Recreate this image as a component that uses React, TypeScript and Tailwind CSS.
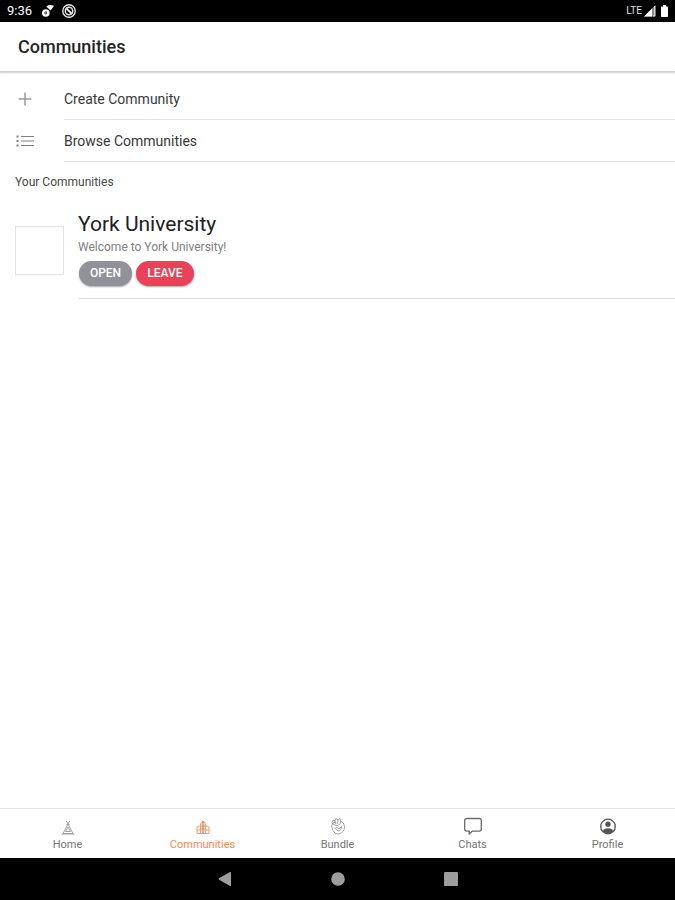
import type { ReactNode } from 'react';

function StatusBar() {
  return (
    <div className="flex h-[22px] shrink-0 items-center justify-between bg-black px-[7px] text-white">
      <div className="flex items-center">
        <span className="w-[34px] text-[13px] leading-4">9:36</span>
        <svg className="mr-[7px]" width="14" height="14" viewBox="0 0 14 14" fill="none" aria-hidden="true">
          <circle cx="4.8" cy="9" r="2.6" stroke="#fff" strokeWidth="2.4" />
          <circle cx="4.8" cy="9" r="1" fill="#aaa" />
          <path d="M5.3 2.500Q9 0 13 2L9.500 6.500Z" fill="#fff" />
        </svg>
        <svg width="14" height="14" viewBox="0 0 14 14" fill="none" stroke="#e4e4e4" aria-hidden="true">
          <circle cx="7" cy="7" r="6.200" strokeWidth="1.400" />
          <circle cx="7" cy="7" r="3.700" strokeWidth="1.500" />
          <path d="M4 4l6 6" strokeWidth="1.800" />
        </svg>
      </div>
      <div className="flex items-center">
        <span className="text-[10px] leading-4 text-[#e0e0e0]">LTE</span>
        <svg className="ml-[2px]" width="12" height="12" viewBox="0 0 12 12" aria-hidden="true">
          <path d="M0 11.500L11.500 0v11.500Z" fill="#8a8a8a" />
          <path d="M0 11.500L8 3.500v8Z" fill="#fff" />
          <path d="M10.800 1v10h-2" fill="none" stroke="#eee" strokeWidth="1" />
        </svg>
        <svg className="ml-[5px]" width="7" height="12" viewBox="0 0 7 12" fill="#fff" aria-hidden="true">
          <path d="M2 0h3v1.500h1.200q.8 0 .8.800v8.700q0 1-.8 1H.8q-.8 0-.8-1V2.300q0-.8.8-.8H2Z" />
        </svg>
      </div>
    </div>
  );
}

function MenuRow({ icon, label }: { icon: ReactNode; label: string }) {
  return (
    <button type="button" className="flex h-[42px] w-full items-center pl-[15px] text-left">
      <span className="flex w-[49px] items-center">{icon}</span>
      <span className="flex h-full flex-1 items-center border-b border-[#e0e0e0] pt-[2px] text-[14px] text-[#383838]">{label}</span>
    </button>
  );
}

const tabs: { label: string; active?: boolean; icon: ReactNode }[] = [
  {
    label: 'Home',
    icon: (
      <g stroke="#a2a2a2" strokeWidth="1">
        <path d="M8.300 4L10 7L11.700 4M10 7L5 16.500H15ZM10 10L7.500 14.500H12.500Z" />
        <path d="M3.500 17h13M8.500 7.500h3" />
      </g>
    ),
  },
  {
    label: 'Communities',
    active: true,
    icon: (
      <g stroke="#f29a68" strokeWidth="1">
        <path d="M7.500 16.500V7M12.500 7V16.500M4 10V16.500H16V10L12.500 8.500M7.500 8.500L4 10" />
        <path d="M7.500 7L10 4L12.500 7M7.500 9H12.500M8 12H12M4 13H7.500M12.500 13H16" />
        <path d="M10 4V16.500" stroke="#ee7c3c" strokeWidth="1.400" />
      </g>
    ),
  },
  {
    label: 'Bundle',
    icon: (
      <g stroke="#999" strokeWidth="0.900">
        <path d="M5 5.500Q2.500 9 4.500 13Q7 18 11 17Q16.500 15 16.500 10Q16 5 12.500 4.500Q13 8 9 8.500Q5 8 4 6L5 3L7 4L8 1.500L10 3L12 1.500L12.500 4.500" />
        <path d="M7 4L8 7M10 3L9.500 7M5 6L8 5M7 10.500Q8.500 14 11 14Q14 12.500 13.500 9.500M8 10L11 12L14 9" />
      </g>
    ),
  },
  {
    label: 'Chats',
    icon: (
      <path
        d="M3.800 1.500H16.200Q18.300 1.500 18.300 3.600V12Q18.300 14.100 16.200 14.100H9.500L6.200 17V14.100H3.800Q1.700 14.100 1.700 12V3.600Q1.700 1.500 3.800 1.500Z"
        stroke="#6c6c6c"
        strokeWidth="1.300"
        strokeLinejoin="round"
      />
    ),
  },
  {
    label: 'Profile',
    icon: (
      <>
        <circle cx="10" cy="9.500" r="7.300" stroke="#555" strokeWidth="1.300" />
        <circle cx="10" cy="7.300" r="2.700" fill="#555" />
        <path d="M4.700 14Q6 11.200 10 11.200Q14 11.200 15.300 14Q13 16.800 10 16.800Q7 16.800 4.700 14Z" fill="#555" />
      </>
    ),
  },
];

export default function App() {
  return (
    <div className="flex min-h-screen flex-col bg-white font-[Roboto,sans-serif]">
      <StatusBar />
      <header className="flex h-[49px] shrink-0 items-center px-[18px] shadow-[0_1px_2px_1px_rgba(0,0,0,0.2)]">
        <h1 className="text-[18px] font-medium text-[#242424]">Communities</h1>
      </header>

      <main className="flex-1 pt-[7px]">
        <MenuRow
          label="Create Community"
          icon={
            <svg width="20" height="20" viewBox="0 0 20 20" stroke="#9a9a9a" strokeWidth="1.500" aria-hidden="true">
              <path d="M10 3.500V16.500M3.500 10H16.500" />
            </svg>
          }
        />
        <MenuRow
          label="Browse Communities"
          icon={
            <svg width="20" height="20" viewBox="0 0 20 20" stroke="#808080" strokeWidth="1.200" aria-hidden="true">
              <path d="M6 5.500H19M6 10H19M6 14.500H19" />
              <path d="M1.500 5.500H3.500M1.500 10H3.500M1.500 14.500H3.500" strokeWidth="1.900" />
            </svg>
          }
        />
        <h2 className="flex h-[40px] items-center px-[15px] text-[12px] text-[#484848]">Your Communities</h2>
        <section className="flex pl-[15px]">
          <div className="mt-[24px] h-[49px] w-[49px] shrink-0 border border-[#e2e2e2]" />
          <div className="ml-[14px] flex-1 border-b border-[#dedede] pt-[8px] pb-[12px]">
            <h3 className="text-[21px] leading-[28px] text-[#202020]">York University</h3>
            <p className="text-[12px] leading-[18px] text-[#808080]">Welcome to York University!</p>
            <div className="mt-[5px] flex gap-[4px] pl-px text-[12px] font-medium text-white">
              <button type="button" className="h-[25px] w-[53px] rounded-full bg-[#919299] pb-[2px] shadow-[0_1px_2px_rgba(0,0,0,0.35)]">OPEN</button>
              <button type="button" className="h-[25px] w-[58px] rounded-full bg-[#ed4059] pb-[2px] shadow-[0_1px_2px_rgba(0,0,0,0.35)]">LEAVE</button>
            </div>
          </div>
        </section>
      </main>

      <nav aria-label="Main" className="flex h-[50px] shrink-0 border-t border-[#e4e4e4]">
        {tabs.map((tab) => (
          <button
            key={tab.label}
            type="button"
            aria-current={tab.active ? 'page' : undefined}
            className={
              tab.active
                ? 'flex flex-1 basis-0 flex-col items-center pt-[8px] text-[11px] leading-4 text-[#f0894f]'
                : 'flex flex-1 basis-0 flex-col items-center pt-[8px] text-[11px] leading-4 text-[#747474]'
            }
          >
            <svg width="20" height="20" viewBox="0 0 20 20" fill="none" aria-hidden="true">
              {tab.icon}
            </svg>
            {tab.label}
          </button>
        ))}
      </nav>

      <div className="flex h-[42px] shrink-0 items-center justify-center gap-[93px] bg-black">
        <button type="button" aria-label="Back" className="flex">
          <svg width="20" height="16" viewBox="0 0 20 16" fill="#9d9d9d" aria-hidden="true">
            <path d="M4 7.300L15 1Q16 .6 16 1.600V14.400Q16 15.400 15 15L4 8.700Q3 8 4 7.300Z" />
          </svg>
        </button>
        <button type="button" aria-label="Home" className="flex">
          <svg width="20" height="16" viewBox="0 0 20 16" fill="#9d9d9d" aria-hidden="true">
            <circle cx="10" cy="8" r="6.800" />
          </svg>
        </button>
        <button type="button" aria-label="Overview" className="flex">
          <svg width="20" height="16" viewBox="0 0 20 16" fill="#9d9d9d" aria-hidden="true">
            <rect x="3" y="1" width="14" height="14" rx="1" />
          </svg>
        </button>
      </div>
    </div>
  );
}
